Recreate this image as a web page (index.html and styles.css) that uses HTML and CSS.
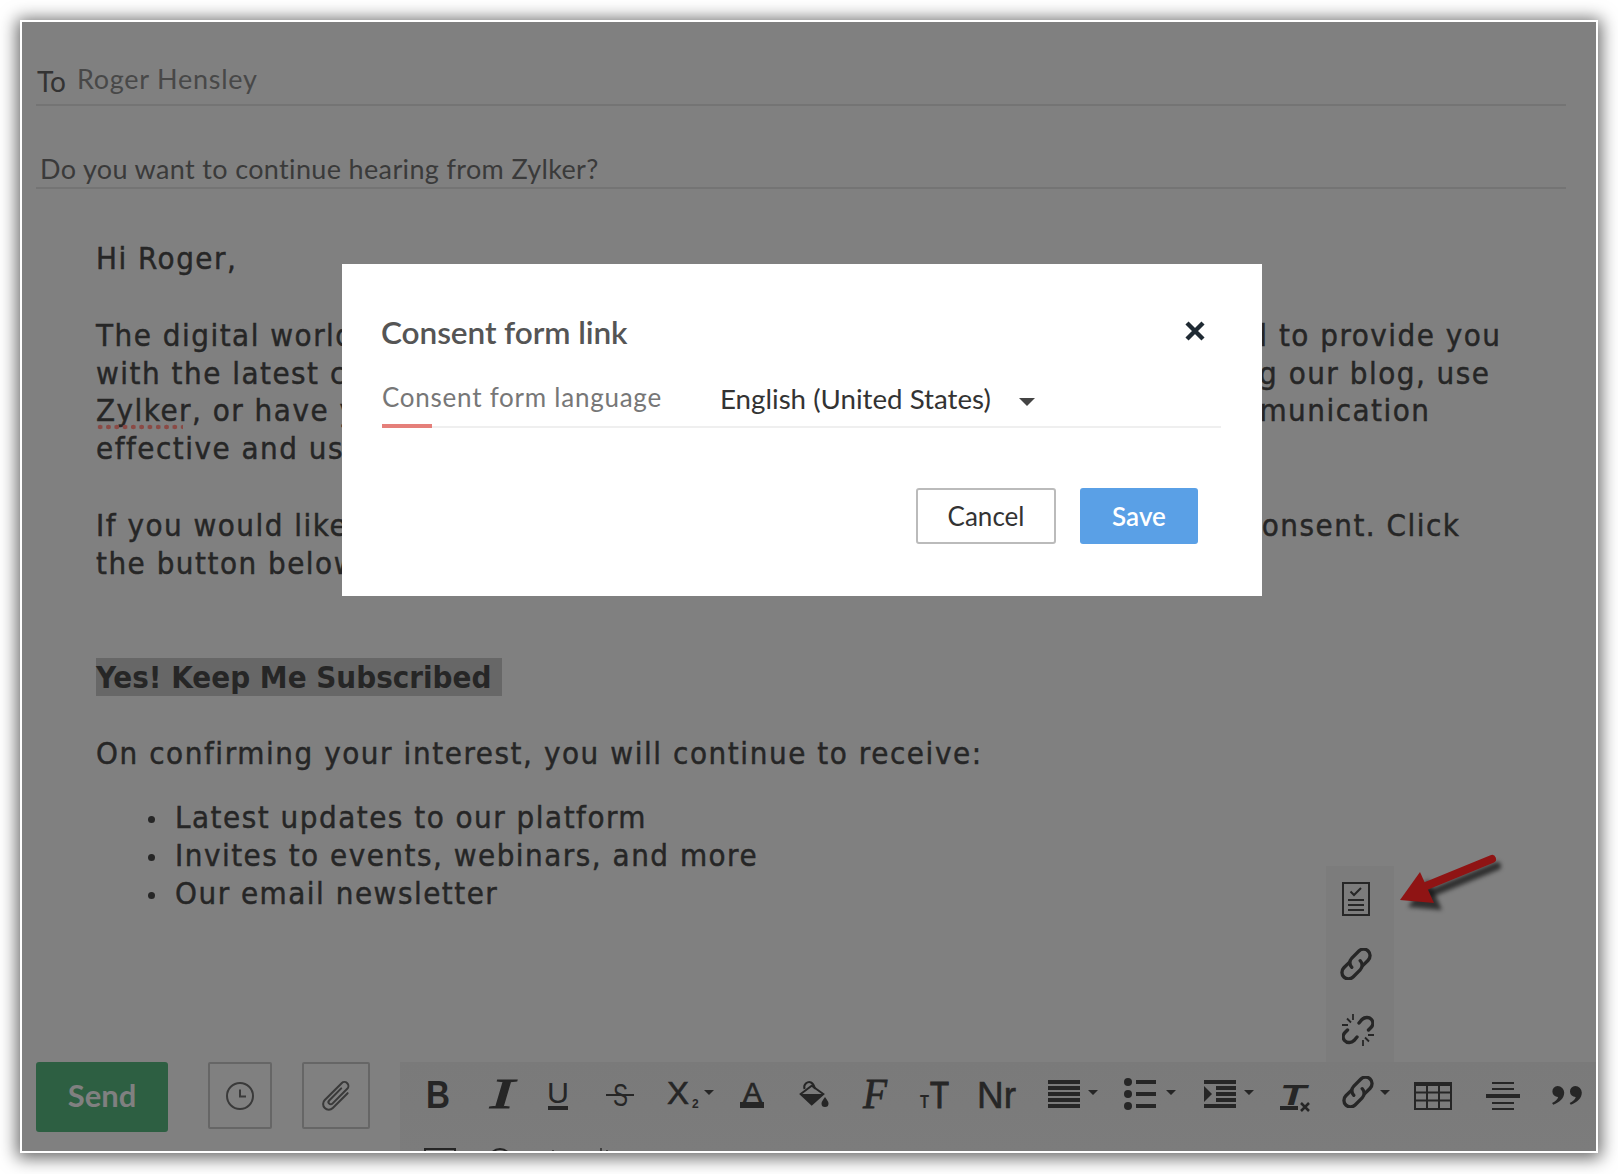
FILE: index.html
```html
<!DOCTYPE html>
<html lang="en">
<head>
<meta charset="utf-8">
<title>Consent form link</title>
<link rel="stylesheet" href="styles.css">
</head>
<body>
<svg class="defs" width="0" height="0" aria-hidden="true">
  <symbol id="chain" viewBox="2.500 2.500 27 27">
    <g transform="rotate(-45 16 16)" fill="none" stroke="#262626" stroke-width="2.800" stroke-linecap="round">
      <path d="M13 11H6.500a5.500 5.500 0 0 0 0 11H15a5.500 5.500 0 0 0 5.500-5.500"/>
      <path d="M19 21H25.500a5.500 5.500 0 0 0 0-11H17a5.500 5.500 0 0 0-5.500 5.500"/>
    </g>
  </symbol>
</svg>
<main class="frame">
  <section class="fields">
    <div class="field to-row"><span class="to-label">To</span><span class="to-value">Roger Hensley</span></div>
    <div class="field subject">Do you want to continue hearing from Zylker?</div>
  </section>

  <article class="body">
    <p>Hi Roger,</p>
    <div class="para">
      <div class="split end1"><span>The digital world</span><span>d to provide you</span></div>
      <div class="split end2"><span>with the latest c</span><span>g our blog, use</span></div>
      <div class="split end3"><span><span class="typo">Zylker</span>, or have y</span><span>munication</span></div>
      <div class="split"><span>effective and us</span></div>
    </div>
    <div class="para">
      <div class="split end4"><span>If you would like</span><span>onsent. Click</span></div>
      <div class="split"><span>the button below</span></div>
    </div>
    <p class="cta"><span class="cta-text">Yes! Keep Me Subscribed</span></p>
    <p class="after">On confirming your interest, you will continue to receive:</p>
    <ul class="perks">
      <li>Latest updates to our platform</li>
      <li>Invites to events, webinars, and more</li>
      <li>Our email newsletter</li>
    </ul>
  </article>

  <footer class="footer">
    <button class="send">Send</button>
    <button class="square clock-btn" aria-label="Schedule">
      <svg class="sq-icon" viewBox="0 0 30 30"><circle cx="15" cy="15" r="13" fill="none" stroke="#3a3a3a" stroke-width="2"/><path d="M15 8.500V15.500H21" fill="none" stroke="#3a3a3a" stroke-width="2"/></svg>
    </button>
    <button class="square clip-btn" aria-label="Attach">
      <svg class="clip-icon" viewBox="0 0 30 30"><g transform="rotate(-45 15 15)" fill="none" stroke="#3a3a3a" stroke-width="1.800" stroke-linecap="round"><path d="M24 20.500H5.500a5 5 0 0 1 0-10H26.500a3.500 3.500 0 0 1 0 7H8a1.500 1.500 0 0 1 0-4H23"/></g></svg>
    </button>
    <div class="toolbar">
      <svg class="ic"><text class="t-bold" x="-2" y="32" font-size="39" textLength="24" lengthAdjust="spacingAndGlyphs">B</text></svg>
      <svg class="ic"><text class="t-serif-i" x="0" y="32" font-size="42" textLength="24" lengthAdjust="spacingAndGlyphs">I</text></svg>
      <svg class="ic"><text class="t-reg" x="-1" y="27" font-size="29" textLength="22" lengthAdjust="spacingAndGlyphs">U</text><rect class="k" x="0" y="30" width="20" height="4"/></svg>
      <svg class="ic"><text class="t-reg" x="7" y="30" font-size="32" textLength="15" lengthAdjust="spacingAndGlyphs">S</text><rect class="k" x="0" y="18" width="28" height="2"/></svg>
      <svg class="ic"><text class="t-med" x="0" y="28" font-size="32" textLength="22" lengthAdjust="spacingAndGlyphs">X</text><text class="t-bold" x="25" y="32" font-size="12">2</text><path class="k" d="M37 14H47L42 19Z"/></svg>
      <svg class="ic"><text class="t-med" x="3" y="26" font-size="28" textLength="19" lengthAdjust="spacingAndGlyphs">A</text><rect class="k" x="0" y="26" width="24" height="6"/></svg>
      <svg class="ic"><path d="M.7 18 11.700 9.700 23.300 18 11.700 28.300Z" fill="none" stroke="#262626" stroke-width="2"/><path class="k" d="M.7 18H23.300L11.700 28.300Z"/><path d="M4.500 13C3 8 8 5 11 6.500 13 7.500 14 9 15 13" fill="none" stroke="#262626" stroke-width="2"/><path class="k" d="M25 21C27 24 28.500 25.500 28.500 27.500A3.500 3.500 0 0 1 21.500 27.500C21.500 25.500 23 24 25 21Z"/></svg>
      <svg class="ic"><text class="t-serif-r" x="0" y="32" font-size="42" textLength="24" lengthAdjust="spacingAndGlyphs">F</text></svg>
      <svg class="ic"><text class="t-bold" x="0" y="32" font-size="19" textLength="9" lengthAdjust="spacingAndGlyphs">T</text><text class="t-strong" x="10" y="32" font-size="36" textLength="19" lengthAdjust="spacingAndGlyphs">T</text></svg>
      <svg class="ic"><text class="t-med" x="-1" y="32" font-size="36" textLength="39" lengthAdjust="spacingAndGlyphs">Nr</text></svg>
      <svg class="ic"><path class="k" d="M0 4H32V8H0ZM0 10H32V14H0ZM0 16H32V20H0ZM0 22H32V26H0ZM0 28H32V32H0ZM40 14H50L45 19Z"/></svg>
      <svg class="ic"><circle class="k" cx="4" cy="6" r="4"/><circle class="k" cx="4" cy="18" r="4"/><circle class="k" cx="4" cy="30" r="4"/><path class="k" d="M12 4H32V8H12ZM12 16H32V20H12ZM12 28H32V32H12ZM42 14H52L47 19Z"/></svg>
      <svg class="ic"><path class="k" d="M0 4H32V8H0ZM12 10H32V14H12ZM12 16H32V20H12ZM12 22H32V26H12ZM0 28H32V32H0ZM0 10L8 18 0 26ZM40 14H50L45 19Z"/></svg>
      <svg class="ic"><text class="t-sans-i" x="0" y="29" font-size="30" textLength="26" lengthAdjust="spacingAndGlyphs">T</text><rect class="k" x="0" y="30" width="18" height="4"/><path d="M21 27 29 35M29 27 21 35" stroke="#262626" stroke-width="2.500"/></svg>
      <svg class="ic"><use href="#chain" x="0" y="0" width="32" height="32"/><path class="k" d="M38 14H48L43 19Z"/></svg>
      <svg class="ic"><rect x="1" y="7" width="36" height="26" fill="none" stroke="#262626" stroke-width="2"/><rect class="k" x="0" y="6" width="38" height="4"/><path d="M13 8V33M25 8V33M1 16.500H37M1 24.500H37" stroke="#262626" stroke-width="2"/></svg>
      <svg class="ic"><path class="k" d="M6 6H28V8H6ZM6 12H28V14H6ZM0 18H34V22H0ZM6 26H28V28H6ZM6 32H28V34H6Z"/></svg>
      <svg class="ic"><path class="k" transform="translate(-1 -1) scale(1.100)" d="M6 10A6 6 0 0 1 12 16C12 21 8 25 2 27L1 25.500C4 24 6 22 6.500 20A5 5 0 0 1 6 10ZM22 10A6 6 0 0 1 28 16C28 21 24 25 18 27L17 25.500C20 24 22 22 22.500 20A5 5 0 0 1 22 10Z"/></svg>
      <svg class="ic"><rect x="-3" y="1" width="30" height="22" fill="none" stroke="#262626" stroke-width="2"/></svg>
      <svg class="ic"><circle cx="10" cy="12" r="11" fill="none" stroke="#262626" stroke-width="2"/></svg>
      <svg class="ic"><path class="k" d="M4 2H6V5H4ZM52 0H54V5H52ZM58 2H60V5H58Z" opacity=".7"/></svg>
    </div>
  </footer>

  <aside class="side-tools">
    <svg class="side-icon doc" viewBox="0 0 28 34"><rect x="1" y="1" width="26" height="32" fill="none" stroke="#262626" stroke-width="2"/><path d="M8.500 9.500 12 13 19 6" fill="none" stroke="#262626" stroke-width="2"/><path d="M6 18H22M6 23H22M6 28H22" stroke="#262626" stroke-width="2"/></svg>
    <svg class="side-icon link"><use href="#chain" width="32" height="32"/></svg>
    <svg class="side-icon unlink" viewBox="0 0 32 32"><g fill="none" stroke="#262626" stroke-width="3.400" stroke-linecap="round"><path d="M17 9 20 5.500C22.500 3 27 2.500 29.500 5.500 31.500 8 31 11.500 29 13.500L26.500 16"/><path d="M15 23 12 26.500C9.500 29 5 29.500 2.500 26.500 .5 24 1 20.500 3 18.500L5.500 16"/></g><path d="M0 11H6M11 0V6M5 4.500 9 8.500M32 21H26M21 32V26M27 27.500 23 23.500" stroke="#262626" stroke-width="1.800"/></svg>
  </aside>

  <svg class="arrow" viewBox="0 0 110 60" aria-hidden="true">
    <g class="arrow-shadow">
      <path d="M3 47 23 19 37 50Z" fill="#141414" opacity=".75" transform="translate(5 7)"/>
      <path d="M26 33 92 6" stroke="#141414" stroke-width="8" stroke-linecap="round" opacity=".75" transform="translate(5 7)"/>
    </g>
    <path d="M26 33 92 6" stroke="#8f1414" stroke-width="8" stroke-linecap="round"/>
    <path d="M0 47 20 19 34 50Z" fill="#8f1414"/>
  </svg>

  <section class="dialog" role="dialog" aria-label="Consent form link">
    <header class="dialog-head">
      <h2>Consent form link</h2>
      <svg class="close" viewBox="0 0 20 20" aria-label="Close"><path d="M2 2 18 18M18 2 2 18" stroke="#1f2a33" stroke-width="4.400"/></svg>
    </header>
    <div class="lang-row">
      <span class="lang-label">Consent form language</span>
      <span class="lang-value">English (United States)</span>
      <span class="caret"></span>
    </div>
    <div class="actions">
      <button class="cancel">Cancel</button>
      <button class="save">Save</button>
    </div>
  </section>
</main>
</body>
</html>
```
FILE: styles.css
```css
* { box-sizing: border-box; }
html, body { margin: 0; background: #fff; }
body { width: 1618px; height: 1174px; overflow: hidden; padding: 20px; }
.defs { position: absolute; }

.frame {
  position: relative;
  width: 1578px;
  height: 1133px;
  border: 2px solid #fff;
  background: #808080;
  box-shadow: 0 2px 16px 3px rgba(0,0,0,.6);
  overflow: hidden;
  display: flex;
  flex-direction: column;
  color: #262626;
}

.fields { margin: 0 30px 0 14px; font-family: Lato, "Noto Sans", sans-serif; }
.field { border-bottom: 2px solid #747474; }
.to-row { height: 84px; display: flex; align-items: flex-end; padding: 0 0 6px 1px; }
.to-label { font-size: 28px; line-height: 34px; color: #333; margin-right: 11px; }
.to-value { font-size: 27px; line-height: 34px; color: #484848; letter-spacing: .75px; position: relative; top: -2px; }
.subject { height: 83px; padding: 47px 0 0 4px; font-size: 27px; line-height: 32px; color: #3a3a3a; letter-spacing: .35px; white-space: nowrap; }

.body {
  padding: 51px 0 0 74px;
  font-family: "DejaVu Sans", sans-serif;
  font-stretch: condensed;
  font-size: 31px;
  line-height: 37.800px;
  letter-spacing: 1.500px;
  -webkit-text-stroke: .45px #262626;
  color: #262626;
  white-space: nowrap;
}
.body p { margin: 0; }
.para { margin-top: 39px; }
.para + .para { margin-top: 39px; }
.split { display: grid; grid-template-columns: 1fr auto; height: 37.800px; }
.end1 { padding-right: 94.500px; }
.end2 { padding-right: 105.500px; }
.end3 { padding-right: 165.500px; }
.end4 { padding-right: 135.500px; }
.typo { position: relative; display: inline-block; }
.typo::after {
  content: "";
  position: absolute;
  left: 0; bottom: 0;
  width: 87px; height: 6px;
  background: radial-gradient(circle, #8a4a45 2.200px, transparent 2.600px) 0 0 / 8.300px 6px repeat-x;
}
.body .cta { margin-top: 75px; }
.cta-text {
  display: inline-block;
  background: #676767;
  font-weight: 700;
  letter-spacing: 0;
  -webkit-text-stroke: 0;
  padding-right: 11px;
  line-height: 38px;
}
.body .after { margin-top: 39px; letter-spacing: 1.570px; }
.perks { margin: 26px 0 0; padding: 0 0 0 79px; list-style: none; }
.perks li { position: relative; }
.perks li::before {
  content: "";
  position: absolute;
  left: -27px; top: 17px;
  width: 7px; height: 7px;
  border-radius: 50%;
  background: #262626;
}

.footer {
  margin-top: auto;
  height: 89px;
  flex: none;
  display: flex;
  align-items: flex-start;
  padding-left: 14px;
  font-family: Lato, "Noto Sans", sans-serif;
}
button { font-family: Lato, "Noto Sans", sans-serif; cursor: pointer; }
.send {
  width: 132px; height: 70px;
  background: #2d5f42;
  border: 0; border-radius: 3px;
  color: #808080;
  font-size: 31px; font-weight: 700;
  padding: 0 0 4px;
}
.square {
  height: 67px;
  background: transparent;
  border: 2px solid #666;
  border-radius: 2px;
  padding: 0;
  display: flex; align-items: center; justify-content: center;
}
.clock-btn { width: 64px; margin-left: 40px; }
.clip-btn { width: 68px; margin-left: 30px; }
.sq-icon { width: 30px; height: 30px; }
.clip-icon { width: 34px; height: 34px; }

.toolbar {
  margin-left: 30px;
  flex: 1;
  height: 89px;
  background: linear-gradient(#7a7a7a, #7c7c7c);
  overflow: hidden;
  padding: 14px 0 0 28px;
  display: grid;
  grid-template-columns: 62px 58px 58px 61px 73px 60px 63px 57px 58px 70px 76px 80px 76px 62px 72px 72px 66px 1fr;
  grid-auto-rows: 40px;
  row-gap: 32px;
}
.ic { display: block; width: 100%; height: 40px; overflow: visible; }
.k { fill: #262626; }
.ic text { fill: #262626; }
.t-bold { font-family: "Liberation Sans", sans-serif; font-weight: 700; }
.t-med { font-family: "Liberation Sans", sans-serif; font-weight: 400; stroke: #262626; stroke-width: .6px; }
.t-strong { font-family: "Liberation Sans", sans-serif; font-weight: 400; stroke: #262626; stroke-width: 1.200px; }
.t-reg { font-family: "Liberation Sans", sans-serif; }
.t-sans-i { font-family: "Liberation Sans", sans-serif; font-style: italic; font-weight: 700; }
.t-serif-i { font-family: "Liberation Serif", serif; font-style: italic; stroke: #262626; stroke-width: 1px; }
.t-serif-r { font-family: "Liberation Serif", serif; font-style: italic; stroke: #262626; stroke-width: .8px; }

.side-tools {
  position: absolute;
  left: 1304px; top: 844px;
  width: 68px; height: 196px;
  background: #7c7c7c;
  display: flex; flex-direction: column; align-items: center;
  padding-right: 8px;
}
.side-icon { display: block; flex: none; }
.doc { width: 28px; height: 34px; margin-top: 16px; }
.link { width: 32px; height: 32px; margin-top: 32px; }
.unlink { width: 32px; height: 32px; margin: 34px 0 0 4px; }

.arrow { position: absolute; left: 1378px; top: 831px; width: 110px; height: 60px; overflow: visible; }
.arrow-shadow { filter: blur(2px); }

.dialog {
  position: absolute;
  left: 320px; top: 242px;
  width: 920px; height: 332px;
  background: #fff;
  padding: 0 41px 0 40px;
  font-family: Lato, "Noto Sans", sans-serif;
}
.dialog-head { display: flex; justify-content: space-between; align-items: flex-start; padding: 47px 16px 0 0; height: 98px; }
.dialog-head h2 { margin: 0 0 0 -1px; font-size: 31.600px; line-height: 42px; font-weight: 600; color: #555; letter-spacing: -.1px; }
.close { width: 20px; height: 20px; margin-top: 10px; }
.lang-row {
  position: relative;
  height: 66px;
  border-bottom: 2px solid #efefef;
  display: flex; align-items: flex-start;
  padding-top: 18px;
}
.lang-row::after { content: ""; position: absolute; left: 0; bottom: -2px; width: 50px; height: 4px; background: #e57f7a; }
.lang-label { width: 338px; font-size: 26px; line-height: 34px; color: #777; letter-spacing: .75px; }
.lang-value { font-size: 27.700px; line-height: 38px; color: #333; }
.caret { width: 0; height: 0; margin: 18px 0 0 28px; border: 8px solid transparent; border-top-color: #444; border-bottom: 0; }
.actions { display: flex; justify-content: flex-end; gap: 24px; padding: 60px 23px 0 0; }
.actions button { height: 56px; border-radius: 3px; font-size: 26px; }
.cancel { width: 140px; background: #fff; border: 2px solid #bbb; color: #333; }
.save { width: 118px; background: #5aa0e6; border: 0; color: #fff; font-weight: 600; }
```
